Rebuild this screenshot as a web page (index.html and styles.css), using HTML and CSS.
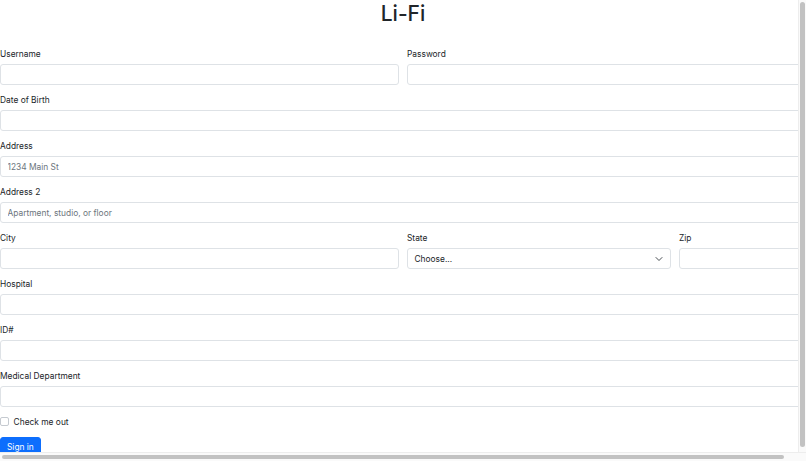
FILE: index.html
```html
<!DOCTYPE html>
<html lang="en">
<head>
<meta charset="utf-8">
<title>Li-Fi</title>
<link rel="stylesheet" href="styles.css">
</head>
<body>
<h1 class="title">Li-Fi</h1>
<form class="form">
  <div class="field c1"><label class="lbl">Username</label><input class="ctl" type="text"></div>
  <div class="field c23"><label class="lbl">Password</label><input class="ctl" type="password"></div>
  <div class="field full"><label class="lbl">Date of Birth</label><input class="ctl" type="text"></div>
  <div class="field full"><label class="lbl">Address</label><input class="ctl" type="text" placeholder="1234 Main St"></div>
  <div class="field full"><label class="lbl">Address 2</label><input class="ctl" type="text" placeholder="Apartment, studio, or floor"></div>
  <div class="field c1"><label class="lbl">City</label><input class="ctl" type="text"></div>
  <div class="field"><label class="lbl">State</label>
    <div class="ctl select"><span>Choose...</span>
      <svg class="chev" viewBox="0 0 16 16" width="8" height="8"><path d="m2 5 6 6 6-6" fill="none" stroke="#343a40" stroke-width="1.8" stroke-linecap="round" stroke-linejoin="round"/></svg>
    </div>
  </div>
  <div class="field"><label class="lbl">Zip</label><input class="ctl" type="text"></div>
  <div class="field full"><label class="lbl">Hospital</label><input class="ctl" type="text"></div>
  <div class="field full"><label class="lbl">ID#</label><input class="ctl" type="text"></div>
  <div class="field full"><label class="lbl">Medical Department</label><input class="ctl" type="text"></div>
  <div class="check full"><span class="box"></span><span class="check-lbl">Check me out</span></div>
  <div class="full"><button class="btn" type="button">Sign in</button></div>
</form>
<div class="vscroll"><div class="vthumb"></div></div>
<div class="hscroll"><div class="hthumb"></div></div>
</body>
</html>
```
FILE: styles.css
```css
html, body {
  margin: 0;
  padding: 0;
  overflow: hidden;
  width: 806px;
  height: 461px;
  background: #fff;
}
body {
  font-family: Inter, Roboto, "Liberation Sans", Arial, sans-serif;
  font-size: 8.4px;
  color: #212529;
  position: relative;
}
.title {
  margin: 0;
  height: 26px;
  font-size: 21px;
  font-weight: 500;
  line-height: 27px;
  text-align: center;
}
.form {
  margin-top: 21px;
  width: 814px;
  display: grid;
  grid-template-columns: 399px 264px 1fr;
  column-gap: 8px;
  row-gap: 8px;
}
.c1 { grid-column: 1; }
.c23 { grid-column: 2 / 4; }
.full { grid-column: 1 / -1; }
.field {
  display: flex;
  flex-direction: column;
}
.lbl {
  display: block;
  line-height: 14px;
  height: 13px;
  margin-bottom: 4px;
}
.ctl {
  box-sizing: border-box;
  height: 21px;
  width: 100%;
  margin: 0;
  border: 1px solid #dee2e6;
  border-radius: 3px;
  padding: 0 6.5px;
  font-family: inherit;
  font-size: 8.4px;
  color: #212529;
  background: #fff;
  outline: none;
}
.ctl::placeholder { color: #6c757d; }
.select {
  display: flex;
  align-items: center;
  justify-content: space-between;
  padding-right: 7px;
}
.chev { display: block; }
.check {
  display: flex;
  align-items: center;
  gap: 5px;
  height: 14px;
}
.box {
  box-sizing: border-box;
  width: 8.6px;
  height: 8.6px;
  border: 1px solid #c5cad0;
  border-radius: 2px;
  background: #fff;
  margin-top: -1px;
}
.check-lbl { line-height: 13px; }
.btn {
  margin-top: 0;
  height: 21px;
  padding: 0 6px;
  border: 1px solid #0d6efd;
  border-radius: 3px;
  background: #0d6efd;
  color: #fff;
  font-family: inherit;
  font-size: 8.4px;
  line-height: 19px;
}
.vscroll {
  position: absolute;
  top: 0;
  right: 0;
  width: 7px;
  height: 453px;
  background: #fafafa;
  border-left: 1px solid #ededed;
}
.vthumb {
  position: absolute;
  top: 2px;
  left: 1px;
  width: 5px;
  height: 445px;
  border-radius: 3px;
  background: #c2c2c2;
}
.hscroll {
  position: absolute;
  left: 0;
  bottom: 0;
  width: 806px;
  height: 8px;
  background: #fafafa;
  border-top: 1px solid #ededed;
}
.hthumb {
  position: absolute;
  left: 2px;
  top: 2px;
  height: 4px;
  width: 782px;
  border-radius: 3px;
  background: #c2c2c2;
}
```
